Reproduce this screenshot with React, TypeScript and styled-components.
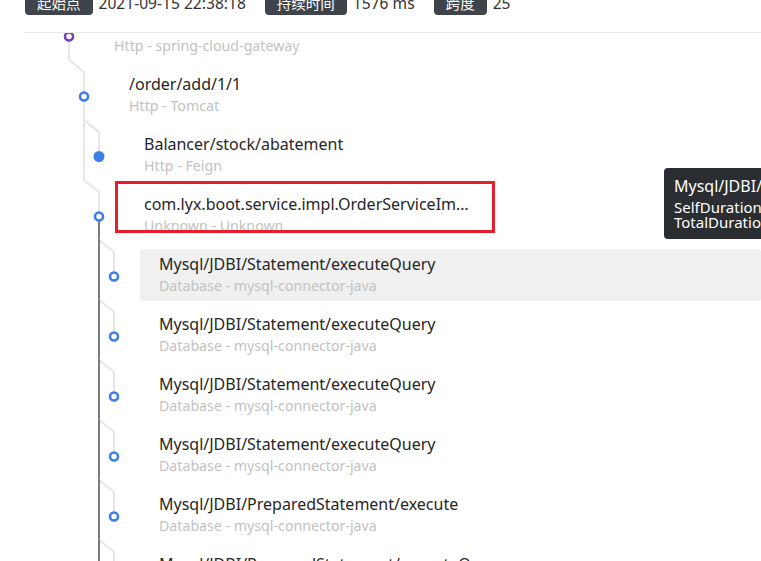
import {FC} from "react";
import styled, {createGlobalStyle} from "styled-components";

const colors = {
  tag: "#3f434a",
  text: "#333",
  title: "#262626",
  sub: "#c2c2c2",
  line: "#e6e6e6",
  trunk: "#7a7a7a",
  blue: "#3c7fe6",
  purple: "#7442b3",
  hover: "#f0f0f0",
  red: "#e41f2b",
}

type Tone = "light" | "dark"

type Span = {
  depth: number
  title: string
  sub: string
  dot: "ring" | "fill"
  color?: string
  branch?: boolean
  trunk?: Tone
  pass?: {depth: number, tone: Tone}[]
  active?: boolean
}

const mysql = (title: string, active = false, last = false): Span => ({
  depth: 3,
  title,
  sub: "Database - mysql-connector-java",
  dot: "ring",
  branch: true,
  pass: last ? [] : [{depth: 2, tone: "dark"}],
  active,
})

const spans: Span[] = [
  {depth: 0, title: "/order/add/1/1", sub: "Http - spring-cloud-gateway", dot: "ring", color: colors.purple, trunk: "light"},
  {depth: 1, title: "/order/add/1/1", sub: "Http - Tomcat", dot: "ring", branch: true, trunk: "light"},
  {depth: 2, title: "Balancer/stock/abatement", sub: "Http - Feign", dot: "fill", branch: true, pass: [{depth: 1, tone: "light"}]},
  {depth: 2, title: "com.lyx.boot.service.impl.OrderServiceImpl.addOrder", sub: "Unknown - Unknown", dot: "ring", branch: true, trunk: "dark"},
  mysql("Mysql/JDBI/Statement/executeQuery", true),
  mysql("Mysql/JDBI/Statement/executeQuery"),
  mysql("Mysql/JDBI/Statement/executeQuery"),
  mysql("Mysql/JDBI/Statement/executeQuery"),
  mysql("Mysql/JDBI/PreparedStatement/execute"),
  mysql("Mysql/JDBI/PreparedStatement/executeQuery"),
  mysql("Mysql/JDBI/PreparedStatement/executeUpdate", false, true),
]

const ROW = 60
const DOT_Y = 37
const dotX = (depth: number) => 44 + depth * 15
const gutter = (depth: number) => 70 + depth * 15
const toneColor = (tone: Tone) => tone === "dark" ? colors.trunk : colors.line

const Connector:FC<{span: Span}> = ({span}) => {
  const x = dotX(span.depth)
  const px = dotX(span.depth - 1)
  const color = span.color || colors.blue

  return(
    <Gutter width={gutter(span.depth)} height={ROW}>
      {span.branch && (
        <polyline points={`${px},0 ${x},12 ${x},${DOT_Y}`} fill="none" stroke={colors.line} strokeWidth="2"/>
      )}
      {span.pass?.map(p => (
        <line key={p.depth} x1={dotX(p.depth)} y1="0" x2={dotX(p.depth)} y2={ROW} stroke={toneColor(p.tone)} strokeWidth="2"/>
      ))}
      {span.trunk && (
        <line x1={x} y1={DOT_Y} x2={x} y2={ROW} stroke={toneColor(span.trunk)} strokeWidth="2"/>
      )}
      {span.dot === "fill"
        ? <circle cx={x} cy={DOT_Y - 0.5} r="5.5" fill={color}/>
        : <circle cx={x} cy={DOT_Y - 0.5} r="4" fill="#fff" stroke={color} strokeWidth="2.6"/>}
    </Gutter>
  )
}

const App:FC = () => {
  return(
    <Page>
      <GlobalStyle/>
      <Header>
        <HeaderRow>
          <Tag>起始点</Tag>
          <Value>2021-09-15 22:38:18</Value>
          <Tag>持续时间</Tag>
          <Value>1576 ms</Value>
          <Tag>跨度</Tag>
          <Value>25</Value>
        </HeaderRow>
      </Header>

      <Viewport>
        <TreeList>
          {spans.map((span, i) => (
            <Row key={i}>
              <Connector span={span}/>
              <Item active={span.active}>
                <Title>{span.title}</Title>
                <Sub>{span.sub}</Sub>
              </Item>
            </Row>
          ))}
        </TreeList>
      </Viewport>

      <Annotation/>

      <Tooltip>
        <TooltipTitle>Mysql/JDBI/Statement/executeQuery</TooltipTitle>
        <TooltipLine>SelfDuration: 1 ms</TooltipLine>
        <TooltipLine>TotalDuration: 1 ms</TooltipLine>
      </Tooltip>
    </Page>
  )
}

const GlobalStyle = createGlobalStyle`
  html, body {
    margin: 0;
    padding: 0;
    background: #fff;
    overflow: hidden;
  }
  body {
    font-family: "Noto Sans", "Noto Sans CJK SC", sans-serif;
  }
`
const Page = styled.div`
  position: relative;
  width: 761px;
  height: 561px;
  padding-left: 25px;
  box-sizing: border-box;
  overflow: hidden;
`
const Header = styled.div`
  display: flex;
  align-items: flex-start;
  height: 32px;
  border-bottom: 1px solid #e8e8e8;
  background: #fff;
`
const HeaderRow = styled.div`
  display: flex;
  align-items: center;
  margin-top: -9px;
  height: 24px;
`
const Tag = styled.span`
  height: 24px;
  padding: 0 12px;
  border-radius: 4px;
  background: ${colors.tag};
  color: #fff;
  font-size: 14.5px;
  line-height: 24px;
`
const Value = styled.span`
  margin: 0 19px 0 6px;
  font-size: 15.6px;
  color: ${colors.text};
`
const Viewport = styled.div`
  height: calc(100% - 33px);
  overflow: hidden;
`
const TreeList = styled.div`
  margin-top: -33px;
  display: flex;
  flex-direction: column;
`
const Row = styled.div`
  display: flex;
  height: ${ROW}px;
`
const Gutter = styled.svg`
  flex: none;
  overflow: visible;
`
const Item = styled.div<{active?: boolean}>`
  flex: 1;
  height: 52px;
  margin-top: 9px;
  padding: 4px 19px;
  box-sizing: border-box;
  border-radius: 3px;
  background: ${props => props.active ? colors.hover : "transparent"};
`
const Title = styled.div`
  max-width: 325px;
  overflow: hidden;
  white-space: nowrap;
  text-overflow: ellipsis;
  font-size: 16px;
  line-height: 22px;
  color: ${colors.title};
`
const Sub = styled.div`
  font-size: 14.2px;
  line-height: 22px;
  color: ${colors.sub};
`
const Annotation = styled.div`
  position: absolute;
  left: 115px;
  top: 181px;
  width: 380px;
  height: 52px;
  box-sizing: border-box;
  border: 3px solid ${colors.red};
`
const Tooltip = styled.div`
  position: absolute;
  left: 664px;
  top: 168px;
  width: 290px;
  height: 71px;
  padding: 8px 10px 0;
  box-sizing: border-box;
  border-radius: 4px;
  background: #2a2d31;
  color: #fff;
`
const TooltipTitle = styled.div`
  margin-bottom: 4px;
  font-size: 16px;
  line-height: 20px;
  white-space: nowrap;
`
const TooltipLine = styled.div`
  font-size: 15px;
  line-height: 15px;
  white-space: nowrap;
`

export default App
